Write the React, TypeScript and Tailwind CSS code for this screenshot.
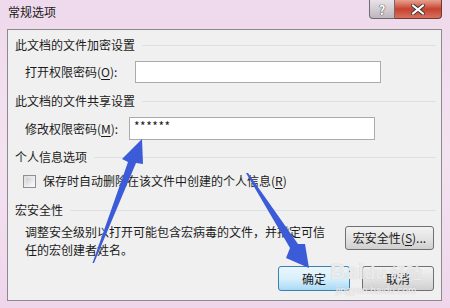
import type { ReactNode } from "react";

const font = { fontFamily: '"Noto Sans CJK SC", "Liberation Sans", sans-serif' };

function Heading({ children }: { children: ReactNode }) {
  return (
    <div className="flex h-4 items-center gap-[7px] leading-4">
      <span>{children}</span>
      <div className="h-px flex-1 bg-[#d9e0e6]" />
    </div>
  );
}

function Key({ children }: { children: ReactNode }) {
  return <span className="underline underline-offset-2">{children}</span>;
}

function Button({ children, primary = false, className = "" }: { children: ReactNode; primary?: boolean; className?: string }) {
  return (
    <div
      className={
        "flex items-center justify-center rounded-[3px] border text-[12px] " +
        (primary
          ? "border-[#3c7fb1] bg-gradient-to-b from-[#eaf6fd] via-[#d9f0fc] to-[#a7d9f5] "
          : "border-[#707070] bg-gradient-to-b from-[#f2f2f2] via-[#e4e4e4] to-[#cfcfcf] ") +
        className
      }
    >
      {children}
    </div>
  );
}

export default function App() {
  return (
    <div
      className="relative h-[308px] w-[450px] overflow-hidden bg-gradient-to-b from-[#efd9ec] via-[#f3e2f0] to-[#efd6eb] text-[12px] text-[#1b1b1b]"
      style={font}
    >
      {/* Title bar */}
      <div className="flex h-[29px] items-start">
        <div className="pl-2 pt-[4px] text-[12px] leading-4 text-[#1a1a1a]">常规选项</div>
        <div className="ml-auto mr-[8px] flex h-[19px]">
          <div className="flex w-[26px] items-center justify-center rounded-bl-[4px] border border-t-0 border-[#6f6a70] bg-gradient-to-b from-[#e9e3e9] via-[#d3cdd3] to-[#bdb7bd] text-[13px] font-bold leading-none text-white [text-shadow:0_0_1px_#333,0_0_1px_#333]">
            ?
          </div>
          <div className="flex w-[47px] items-center justify-center rounded-br-[4px] border border-l-0 border-t-0 border-[#6f3a35] bg-gradient-to-b from-[#e6a08f] via-[#c7412f] to-[#d7705c]">
            <svg width="14" height="11" viewBox="0 0 14 11">
              <path d="M2 1.5 L12 9.5 M12 1.5 L2 9.5" stroke="#3b3b3b" strokeWidth="4" strokeLinecap="square" />
              <path d="M2 1.5 L12 9.5 M12 1.5 L2 9.5" stroke="#ffffff" strokeWidth="2" strokeLinecap="square" />
            </svg>
          </div>
        </div>
      </div>

      {/* Client area */}
      <div className="ml-[7px] h-[272px] w-[435px] border border-[#8d8a8f] bg-[#f0f0f0]">
        <div className="flex flex-col pl-[7px] pr-[5px] pt-[7px]">
          <Heading>此文档的文件加密设置</Heading>

          <div className="mt-2 flex h-[22px] items-center">
            <div className="w-[120px] pl-[10px]">
              打开权限密码(<Key>O</Key>):
            </div>
            <div className="h-[22px] w-[246px] border border-[#ababab] bg-white" />
          </div>

          <div className="mt-[10px]">
            <Heading>此文档的文件共享设置</Heading>
          </div>

          <div className="mt-2 flex h-[23px] items-center">
            <div className="w-[114px] pl-[10px]">
              修改权限密码(<Key>M</Key>):
            </div>
            <div className="flex h-[23px] w-[246px] items-start border border-[#ababab] bg-white pl-[4px] pt-[2px] text-[12px] leading-3 tracking-[0.5px]">
              ******
            </div>
          </div>

          <div className="mt-[9px]">
            <Heading>个人信息选项</Heading>
          </div>

          <div className="mt-2 flex h-4 items-center pl-[8px]">
            <div className="h-[13px] w-[13px] border border-[#8e8f8f] bg-gradient-to-br from-[#dcdcdc] to-[#fbfbfb] p-[2px]">
              <div className="h-full w-full bg-gradient-to-br from-[#cbcfd5] to-[#f6f6f6]" />
            </div>
            <span className="ml-[7px]">
              保存时自动删除在该文件中创建的个人信息(<Key>R</Key>)
            </span>
          </div>

          <div className="mt-[13px]">
            <Heading>宏安全性</Heading>
          </div>

          <div className="mt-[5px] flex items-start pr-[2px]">
            <p className="w-[310px] pl-[10px] leading-[18px]">
              调整安全级别以打开可能包含宏病毒的文件，并指定可信
              <br />
              任的宏创建者姓名。
            </p>
            <Button className="ml-auto mt-[3px] h-[24px] w-[89px]">
              宏安全性(<Key>S</Key>)...
            </Button>
          </div>

          <div className="mt-[7px] flex justify-end gap-[12px] pr-[2px]">
            <Button primary className="h-[25px] w-[72px]">
              确定
            </Button>
            <Button className="h-[25px] w-[72px]">取消</Button>
          </div>
        </div>
      </div>

      {/* Baidu watermark */}
      <div className="pointer-events-none absolute left-[330px] top-[260px] flex flex-col items-center text-white/70">
        <div className="text-[22px] font-bold leading-[24px] [text-shadow:0_0_1px_#bbb]" style={{ fontFamily: '"Liberation Sans", sans-serif' }}>
          Bai<span className="text-[18px]">du</span>
          <span className="ml-1 text-[16px] font-normal" style={font}>经验</span>
        </div>
        <div className="text-[10px] leading-3 [text-shadow:0_0_1px_#bbb]" style={{ fontFamily: '"Liberation Sans", sans-serif' }}>
          jingyan.baidu.com
        </div>
      </div>

      {/* Annotation arrows */}
      <svg className="pointer-events-none absolute left-0 top-0" width="450" height="308" viewBox="0 0 450 308">
        <polygon
          points="92.5,263 128,162 122,159 142,139 143,164 136,163 94,263"
          fill="#3b5bd8"
        />
        <polygon
          points="246,173 290,248 286,258 309,268 305,244 298,244 248,173"
          fill="#3b5bd8"
        />
      </svg>
    </div>
  );
}
